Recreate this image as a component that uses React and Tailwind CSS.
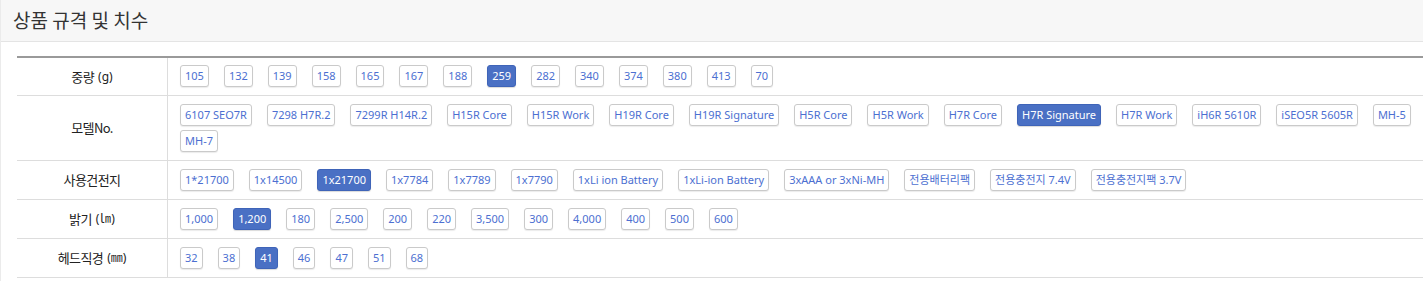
const specs = [
  {
    label: '중량',
    unit: '(g)',
    values: ['105', '132', '139', '158', '165', '167', '188', '259', '282', '340', '374', '380', '413', '70'],
    active: '259',
  },
  {
    label: '모델No.',
    values: [
      '6107 SEO7R', '7298 H7R.2', '7299R H14R.2', 'H15R Core', 'H15R Work', 'H19R Core', 'H19R Signature',
      'H5R Core', 'H5R Work', 'H7R Core', 'H7R Signature', 'H7R Work', 'iH6R 5610R', 'iSEO5R 5605R', 'MH-5', 'MH-7',
    ],
    active: 'H7R Signature',
  },
  {
    label: '사용건전지',
    values: [
      '1*21700', '1x14500', '1x21700', '1x7784', '1x7789', '1x7790', '1xLi ion Battery', '1xLi-ion Battery',
      '3xAAA or 3xNi-MH', '전용배터리팩', '전용충전지 7.4V', '전용충전지팩 3.7V',
    ],
    active: '1x21700',
  },
  {
    label: '밝기',
    unit: '(㏐)',
    values: ['1,000', '1,200', '180', '2,500', '200', '220', '3,500', '300', '4,000', '400', '500', '600'],
    active: '1,200',
  },
  {
    label: '헤드직경',
    unit: '(㎜)',
    values: ['32', '38', '41', '46', '47', '51', '68'],
    active: '41',
  },
];

const SpecButton = ({ value, active }) => (
  <button
    className={
      active
        ? 'h-[22px] px-[4px] inline-flex items-center rounded-[3px] border border-[#3f64b8] bg-[#4a70c4] text-white text-[11px] shadow-[0_1px_1px_rgba(0,0,0,0.15)]'
        : 'h-[22px] px-[4px] inline-flex items-center rounded-[3px] border border-[#cacaca] bg-white text-[#4c6fd1] text-[11px] shadow-[0_1px_1px_rgba(0,0,0,0.08)]'
    }
  >
    {value}
  </button>
);

export default function App() {
  return (
    <div className="w-full overflow-hidden bg-white font-['Noto_Sans','Noto_Sans_CJK_KR',sans-serif]">
      <div className="w-[1440px] border-l border-[#ebebeb] pb-[5px]">
        {/* 제목 */}
        <div className="h-[42px] bg-[#f7f7f7] border-b border-[#e4e4e4] pl-3 flex items-center">
          <h2 className="text-[19px] text-[#333] font-['Noto_Sans_CJK_KR',sans-serif]">
            상품 규격 및 치수
          </h2>
        </div>

        {/* 규격 테이블 */}
        <div className="pl-4 pt-[14px]">
          <div className="border-t-2 border-[#9a9a9a]">
            {specs.map((row, i) => (
              <div key={row.label} className="flex border-b border-[#dddddd]">
                <div className="w-[151px] shrink-0 border-r border-[#dddddd] flex items-center justify-center text-[13px] text-[#222] font-['Noto_Sans_CJK_KR',sans-serif] tracking-[-0.6px]">
                  <span>{row.label}</span>
                  {row.unit && (
                    <span className="ml-1 text-[12px] tracking-normal font-['Noto_Sans','Noto_Sans_CJK_KR',sans-serif]">
                      {row.unit}
                    </span>
                  )}
                </div>
                <div
                  className={
                    i === 0
                      ? 'flex-1 min-w-0 pl-3 pr-3 pt-[7px] pb-2 flex flex-wrap gap-x-[15px] gap-y-1'
                      : 'flex-1 min-w-0 pl-3 pr-3 py-2 flex flex-wrap gap-x-[15px] gap-y-1'
                  }
                >
                  {row.values.map((v) => (
                    <SpecButton key={v} value={v} active={v === row.active} />
                  ))}
                </div>
              </div>
            ))}
          </div>
        </div>
      </div>
    </div>
  );
}
